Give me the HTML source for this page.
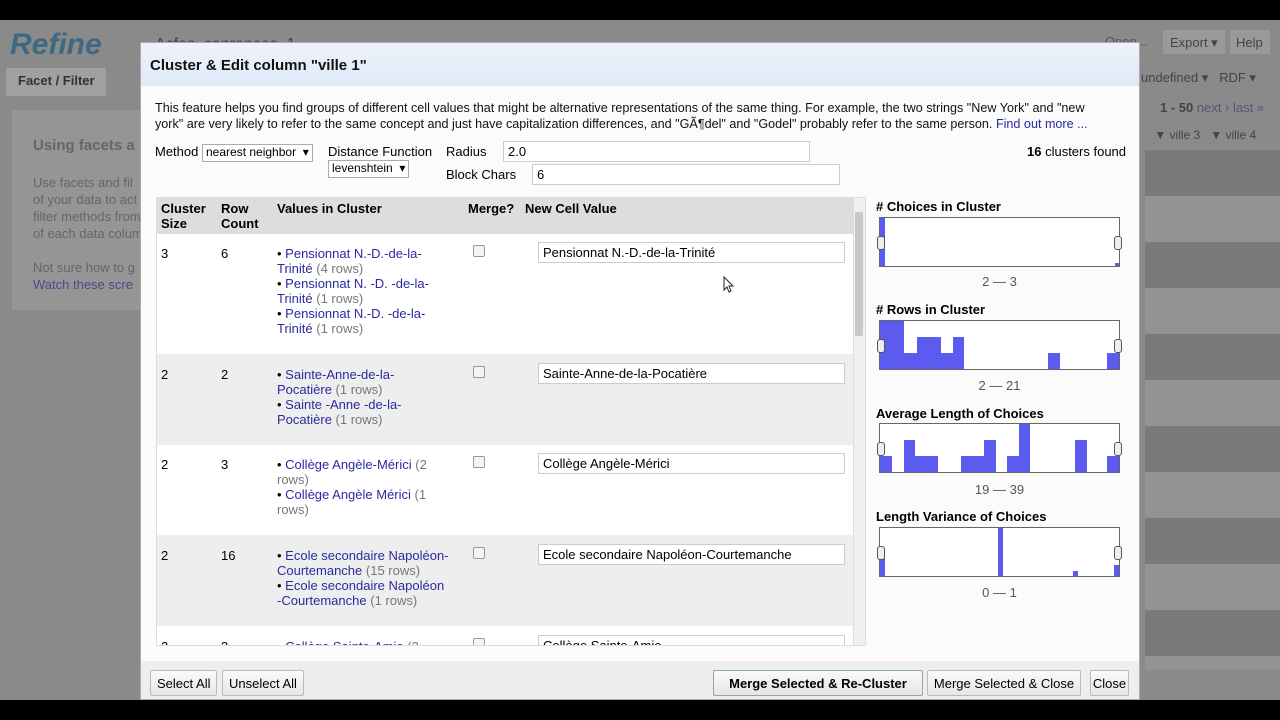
<!DOCTYPE html>
<html><head><meta charset="utf-8"><style>
body{margin:0;width:1280px;height:720px;overflow:hidden;background:#000;font-family:"Liberation Sans",sans-serif;font-size:13px;position:relative}
.a{position:absolute}
.bg{left:0;top:20px;width:1280px;height:680px;background:#8a8a8a}
.lk{color:#2a2aa0}
.g{color:#777}
.dlg{left:140px;top:42px;width:1000px;height:658px;background:#fbfbfb;border:1px solid #aaa;box-sizing:border-box}
.hd{left:0;top:0;width:998px;height:43px;background:linear-gradient(#eef3fb,#dfe9f8)}
.box{background:#fff;border:1px solid #ccc;box-sizing:border-box;height:21px;padding:2px 4px;font-size:13px}
.sel{background:#fff;border:1px solid #aaa;font-size:12px;padding:0 3px;height:16px;line-height:15px}
.btn{border:1px solid #bbb;background:linear-gradient(#fafafa,#e6e6e6);border-radius:2px;height:26px;line-height:25px;padding:0 6px;font-size:13px;box-sizing:border-box;white-space:nowrap}
.row{left:0;width:696px}
.cb{width:10px;height:10px;border:1px solid #999;background:#f4f4f4;border-radius:2px}
.val{left:120px;width:172px;line-height:15px}
.chart{left:738px;width:241px;height:50px;border:1px solid #666;background:#fff;box-sizing:border-box}
.b{position:absolute;bottom:0;background:#5b5bef}
.hdl{position:absolute;top:19px;width:6px;height:12px;border:1px solid #555;border-radius:3px;background:#eee}
h4{margin:0;font-size:13px;position:absolute;left:735px}
.rng{position:absolute;left:738px;width:241px;text-align:center;color:#555}
</style></head><body>
<div class="a bg"></div>
<div class="a" style="left:10px;top:28px;font:italic bold 30px 'Liberation Sans';color:#3d6a82">Refine</div>
<div class="a" style="left:155px;top:36px;font-size:16px;color:#444">Acfas_conrences_1</div>
<div class="a" style="left:6px;top:68px;width:100px;height:28px;background:#a0a0a0"></div>
<div class="a" style="left:18px;top:73px;color:#333;font-weight:bold">Facet / Filter</div>
<div class="a" style="left:12px;top:110px;width:128px;height:200px;background:#959595"></div>
<div class="a" style="left:33px;top:137px;color:#666;font-size:15px;font-weight:bold">Using facets a</div>
<div class="a" style="left:33px;top:174px;color:#666;line-height:17px">Use facets and fil<br>of your data to act<br>filter methods from<br>of each data colum<br><br>Not sure how to g<br><span style="color:#4a4a8a">Watch these scre</span></div>
<div class="a" style="left:1105px;top:34px;color:#555">Open...</div>
<div class="a" style="left:1163px;top:30px;width:62px;height:24px;background:#999"></div>
<div class="a" style="left:1170px;top:35px;color:#444">Export ▾</div>
<div class="a" style="left:1230px;top:30px;width:40px;height:24px;background:#999"></div>
<div class="a" style="left:1236px;top:35px;color:#444">Help</div>
<div class="a" style="left:1141px;top:70px;color:#444">undefined ▾ &nbsp; RDF ▾</div>
<div class="a" style="left:1160px;top:100px;color:#444"><b>1 - 50</b> <span style="color:#557">next › last »</span></div>
<div class="a" style="left:1141px;top:128px;color:#444;font-size:12px">&nbsp; &nbsp; ▼ ville 3 &nbsp; ▼ ville 4</div>
<div class="a" style="left:1145px;top:150px;width:135px;height:520px;background:repeating-linear-gradient(#7a7a7a 0 46px,#939393 46px 92px)"></div>

<div class="a dlg">
<div class="a hd"></div>
<div class="a" style="left:9px;top:14px;font-size:15px;font-weight:bold;color:#111">Cluster &amp; Edit column "ville 1"</div>
<div class="a" style="left:14px;top:57px;width:950px;line-height:16px;font-size:12.6px;color:#111">This feature helps you find groups of different cell values that might be alternative representations of the same thing. For example, the two strings "New York" and "new york" are very likely to refer to the same concept and just have capitalization differences, and "GÃ¶del" and "Godel" probably refer to the same person. <span class="lk">Find out more ...</span></div>
<div class="a" style="left:14px;top:101px">Method</div>
<div class="a sel" style="left:61px;top:101px">nearest neighbor &nbsp;▾</div>
<div class="a" style="left:187px;top:101px">Distance Function</div>
<div class="a sel" style="left:187px;top:117px">levenshtein &nbsp;▾</div>
<div class="a" style="left:305px;top:101px">Radius</div>
<div class="a box" style="left:362px;top:98px;width:307px">2.0</div>
<div class="a" style="left:305px;top:124px">Block Chars</div>
<div class="a box" style="left:391px;top:121px;width:308px">6</div>
<div class="a" style="left:886px;top:101px"><b>16</b> clusters found</div>

<div class="a" style="left:15px;top:154px;width:710px;height:449px;background:#fff;overflow:hidden;border:1px solid #ddd;box-sizing:border-box">
 <div class="a" style="left:0;top:0;width:696px;height:36px;background:#ddd"></div>
 <div class="a" style="left:4px;top:3px;font-weight:bold;line-height:15px">Cluster<br>Size</div>
 <div class="a" style="left:64px;top:3px;font-weight:bold;line-height:15px">Row<br>Count</div>
 <div class="a" style="left:120px;top:3px;font-weight:bold">Values in Cluster</div>
 <div class="a" style="left:311px;top:3px;font-weight:bold">Merge?</div>
 <div class="a" style="left:368px;top:3px;font-weight:bold">New Cell Value</div>

 <div class="a row" style="top:36px;height:120px;background:#fff"></div>
 <div class="a" style="left:4px;top:48px">3</div><div class="a" style="left:64px;top:48px">6</div>
 <div class="a val" style="top:48px"><div>• <span class="lk">Pensionnat N.-D.-de-la-Trinité</span> <span class="g">(4 rows)</span></div><div>• <span class="lk">Pensionnat N. -D. -de-la-Trinité</span> <span class="g">(1 rows)</span></div><div>• <span class="lk">Pensionnat N.-D. -de-la-Trinité</span> <span class="g">(1 rows)</span></div></div>
 <div class="a cb" style="left:316px;top:47px"></div>
 <div class="a box" style="left:381px;top:44px;width:307px">Pensionnat N.-D.-de-la-Trinité</div>

 <div class="a row" style="top:156px;height:91px;background:#eee"></div>
 <div class="a" style="left:4px;top:169px">2</div><div class="a" style="left:64px;top:169px">2</div>
 <div class="a val" style="top:169px"><div>• <span class="lk">Sainte-Anne-de-la-Pocatière</span> <span class="g">(1 rows)</span></div><div>• <span class="lk">Sainte -Anne -de-la-Pocatière</span> <span class="g">(1 rows)</span></div></div>
 <div class="a cb" style="left:316px;top:168px"></div>
 <div class="a box" style="left:381px;top:165px;width:307px">Sainte-Anne-de-la-Pocatière</div>

 <div class="a row" style="top:247px;height:90px;background:#fff"></div>
 <div class="a" style="left:4px;top:259px">2</div><div class="a" style="left:64px;top:259px">3</div>
 <div class="a val" style="top:259px"><div>• <span class="lk">Collège Angèle-Mérici</span> <span class="g">(2 rows)</span></div><div>• <span class="lk">Collège Angèle Mérici</span> <span class="g">(1 rows)</span></div></div>
 <div class="a cb" style="left:316px;top:258px"></div>
 <div class="a box" style="left:381px;top:255px;width:307px">Collège Angèle-Mérici</div>

 <div class="a row" style="top:337px;height:91px;background:#eee"></div>
 <div class="a" style="left:4px;top:350px">2</div><div class="a" style="left:64px;top:350px">16</div>
 <div class="a val" style="top:350px"><div>• <span class="lk">Ecole secondaire Napoléon-Courtemanche</span> <span class="g">(15 rows)</span></div><div>• <span class="lk">Ecole secondaire Napoléon -Courtemanche</span> <span class="g">(1 rows)</span></div></div>
 <div class="a cb" style="left:316px;top:349px"></div>
 <div class="a box" style="left:381px;top:346px;width:307px">Ecole secondaire Napoléon-Courtemanche</div>

 <div class="a" style="left:4px;top:441px">2</div><div class="a" style="left:64px;top:441px">3</div>
 <div class="a val" style="top:441px">• <span class="lk">Collège Sainte-Amie</span> <span class="g">(2</span></div>
 <div class="a cb" style="left:316px;top:440px"></div>
 <div class="a box" style="left:381px;top:437px;width:307px">Collège Sainte-Amie</div>

 <div class="a" style="left:696px;top:0;width:12px;height:447px;background:#f0f0f0;border-left:1px solid #ddd"></div>
 <div class="a" style="left:698px;top:14px;width:8px;height:124px;background:#c8c8c8;border-radius:2px"></div>
</div>

<h4 style="top:156px">#&nbsp;Choices in Cluster</h4>
<div class="a chart" style="top:174px"><div class="b" style="left:0;width:5px;height:48px"></div><div class="b" style="right:0;width:4px;height:3px"></div><div class="hdl" style="left:-3px;top:18px"></div><div class="hdl" style="right:-3px;top:18px"></div></div>
<div class="rng" style="top:231px">2 — 3</div>

<h4 style="top:259px">#&nbsp;Rows in Cluster</h4>
<div class="a chart" style="top:277px"><div class="b" style="left:0;width:24px;height:48px"></div><div class="b" style="left:24px;width:13px;height:16px"></div><div class="b" style="left:37px;width:24px;height:32px"></div><div class="b" style="left:61px;width:12px;height:16px"></div><div class="b" style="left:73px;width:11px;height:32px"></div><div class="b" style="left:168px;width:12px;height:16px"></div><div class="b" style="right:0;width:12px;height:16px"></div><div class="hdl" style="left:-3px;top:18px"></div><div class="hdl" style="right:-3px;top:18px"></div></div>
<div class="rng" style="top:335px">2 — 21</div>

<h4 style="top:363px">Average Length of Choices</h4>
<div class="a chart" style="top:380px"><div class="b" style="left:0;width:12px;height:16px"></div><div class="b" style="left:24px;width:11px;height:32px"></div><div class="b" style="left:35px;width:23px;height:16px"></div><div class="b" style="left:81px;width:23px;height:16px"></div><div class="b" style="left:104px;width:12px;height:32px"></div><div class="b" style="left:127px;width:12px;height:16px"></div><div class="b" style="left:139px;width:11px;height:48px"></div><div class="b" style="left:195px;width:12px;height:32px"></div><div class="b" style="right:0;width:12px;height:16px"></div><div class="hdl" style="left:-3px;top:18px"></div><div class="hdl" style="right:-3px;top:18px"></div></div>
<div class="rng" style="top:439px">19 — 39</div>

<h4 style="top:466px">Length Variance of Choices</h4>
<div class="a chart" style="top:484px"><div class="b" style="left:0;width:5px;height:22px"></div><div class="b" style="left:118px;width:5px;height:48px"></div><div class="b" style="left:193px;width:5px;height:5px"></div><div class="b" style="right:0;width:5px;height:11px"></div><div class="hdl" style="left:-3px;top:18px"></div><div class="hdl" style="right:-3px;top:18px"></div></div>
<div class="rng" style="top:542px">0 — 1</div>

<div class="a" style="left:0;top:618px;width:998px;height:38px;background:#eee"></div>
<div class="a btn" style="left:9px;top:627px">Select All</div>
<div class="a btn" style="left:81px;top:627px">Unselect All</div>
<div class="a btn" style="left:572px;top:627px;width:210px;text-align:center;font-weight:bold;border-color:#8aa">Merge Selected &amp; Re-Cluster</div>
<div class="a btn" style="left:786px;top:627px;width:154px;text-align:center;padding:0">Merge Selected &amp; Close</div>
<div class="a btn" style="left:949px;top:627px;width:39px;text-align:center;padding:0">Close</div>
</div>
<svg class="a" style="left:723px;top:276px" width="12" height="18" viewBox="0 0 12 18"><path d="M1 1 L1 14 L4 11 L6 16 L8 15 L6 10 L10 10 Z" fill="#fff" stroke="#222" stroke-width="1"/></svg>
</body></html>
